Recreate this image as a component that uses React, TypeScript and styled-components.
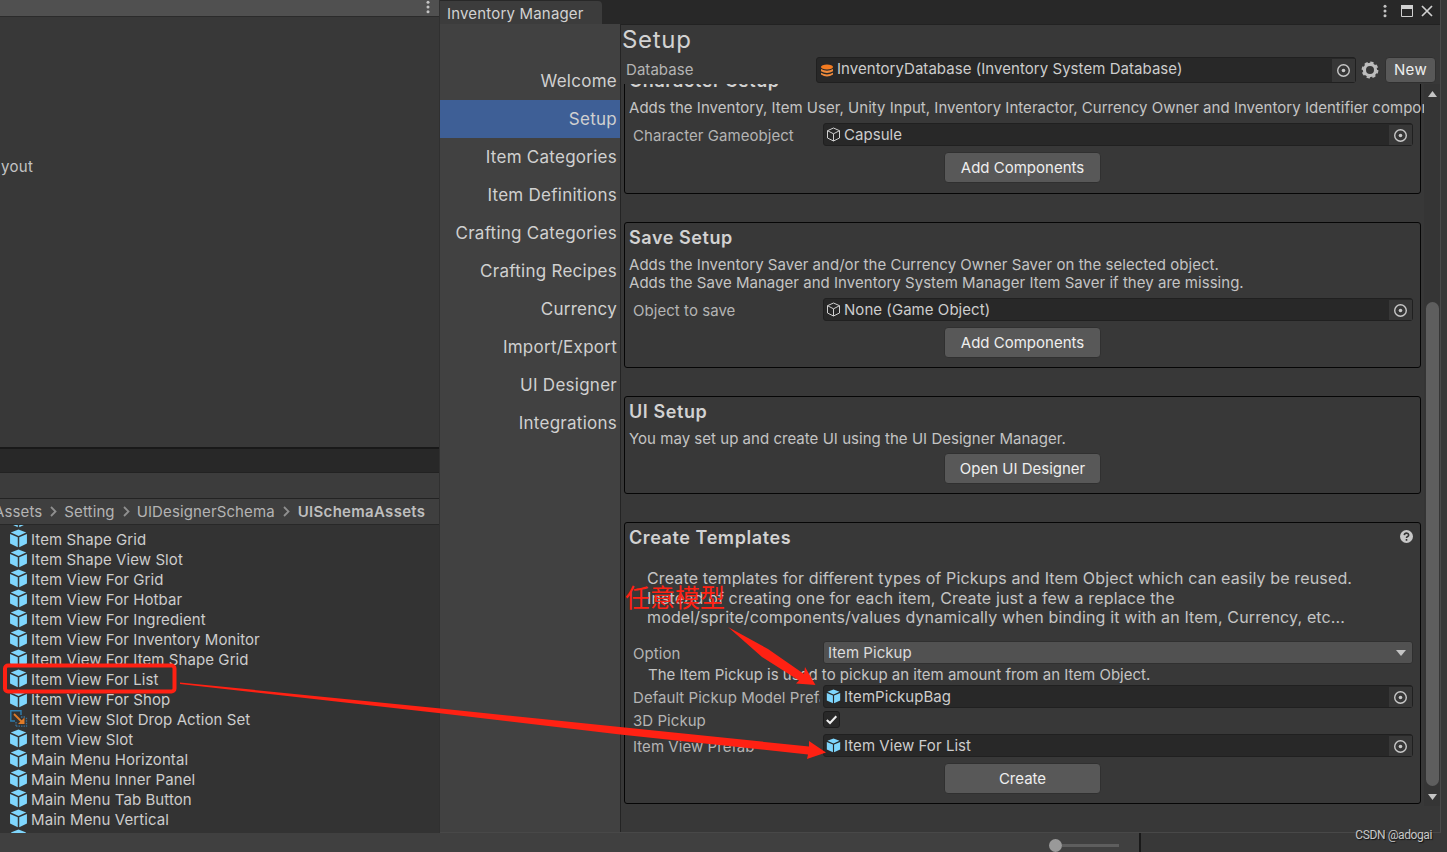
import React from "react";
import styled, { createGlobalStyle } from "styled-components";

const GlobalStyle = createGlobalStyle`
  * {
    box-sizing: border-box;
  }

  body {
    margin: 0;
    overflow: hidden;
    background: #383838;
    color: #c4c4c4;
    font-family: Inter, "Noto Sans CJK SC", sans-serif;
    font-size: 15px;
    letter-spacing: 0.05px;
    white-space: nowrap;
  }

  svg {
    display: block;
    flex: none;
  }
`;

const Editor = styled.div`
  position: relative;
  display: grid;
  grid-template-columns: 440px 1001px 6px;
  grid-template-rows: 833px 19px;

  width: 1447px;
  height: 852px;
  overflow: hidden;
`;

const LeftDock = styled.div`
  display: flex;
  flex-direction: column;

  border-right: 1px solid #303030;
  overflow: hidden;
`;

const HierarchyBar = styled.div`
  display: flex;
  justify-content: flex-end;

  height: 17px;
  padding-right: 7px;

  background: #505050;
  border-bottom: 1px solid #2b2b2b;
`;

const Hierarchy = styled.div`
  height: 430px;
  padding: 140px 0 0 1px;

  background: #383838;
  letter-spacing: 0.3px;
  line-height: 20px;
`;

const DockTabs = styled.div`
  height: 26px;

  background: #282828;
  border-top: 2px solid #191919;
  border-bottom: 1px solid #222;
`;

const DockToolbar = styled.div`
  height: 26px;

  background: #3c3c3c;
  border-bottom: 1px solid #232323;
`;

const Breadcrumb = styled.div`
  display: flex;
  align-items: center;

  height: 26px;

  background: #3f3f3f;
  border-bottom: 1px solid #282828;
  color: #b4b4b4;
  letter-spacing: 0.12px;

  svg {
    margin: 0 7px 0 8px;
  }

  strong {
    margin-left: 1px;

    font-weight: 600;
    color: #bebebe;
    letter-spacing: 0.3px;
  }
`;

const Crumb = styled.span<{ $shift?: number }>`
  margin-left: ${p => p.$shift || 0}px;
`;

const AssetList = styled.div`
  flex: 1;
  overflow: hidden;

  background: #333;
  color: #cdcdcd;
  letter-spacing: 0.08px;
`;

const AssetRow = styled.div`
  display: flex;
  align-items: center;

  height: 20px;
  padding-left: 9px;
  gap: 3px;

  svg {
    margin-bottom: 1px;
  }

  &:first-child {
    margin-top: -16px;
  }
`;

const Window = styled.div`
  display: flex;
  flex-direction: column;

  background: #383838;
  border-right: 1px solid #4a4a4a;
  border-bottom: 1px solid #484848;
`;

const TitleBar = styled.div`
  display: flex;
  justify-content: space-between;

  height: 24px;

  background: #282828;
`;

const Tab = styled.div`
  width: 162px;
  height: 24px;
  margin-top: 1px;
  padding-left: 7px;

  background: #3c3c3c;
  border-radius: 0 4px 0 0;
  line-height: 26px;
  letter-spacing: 0.18px;
  color: #d2d2d2;
`;

const WindowButtons = styled.div`
  display: flex;
  align-items: center;

  padding: 0 7px 2px 0;

  svg:nth-child(2) {
    margin: 0 8px 0 12px;
  }
`;

const WindowBody = styled.div`
  display: flex;
  flex: 1;
  min-height: 0;
`;

const Sidebar = styled.div`
  width: 181px;
  padding-top: 38px;

  background: #414141;
  border-right: 1px solid #242424;
`;

const MenuItem = styled.div<{ $selected?: boolean }>`
  height: 38px;
  padding-right: 3px;

  background: ${p => (p.$selected ? "#3e5f96" : "transparent")};
  color: #d0d0d0;
  font-size: 17px;
  letter-spacing: 0.26px;
  line-height: 39px;
  text-align: right;
`;

const Content = styled.div`
  display: flex;
  flex: 1;
  flex-direction: column;
  min-width: 0;

  border-top: 1px solid #222;
`;

const Heading = styled.div`
  height: 31px;
  padding-left: 1px;

  font-size: 24px;
  letter-spacing: 0.7px;
  line-height: 29px;
  color: #d2d2d2;
`;

const DatabaseRow = styled.div`
  display: flex;
  align-items: center;

  height: 28px;
  padding-left: 5px;
`;

const DatabaseLabel = styled.div`
  width: 190px;
  padding-bottom: 2px;

  color: #b4b4b4;
`;

const ScrollArea = styled.div`
  display: flex;
  height: 722px;
`;

const Viewport = styled.div`
  width: 803px;
  padding-left: 3px;
  overflow: hidden;
`;

const ScrollBar = styled.div`
  display: flex;
  flex-direction: column;
  align-items: center;
  justify-content: space-between;

  width: 16px;
  padding: 7px 0 6px;

  background: #353535;
`;

const Thumb = styled.div`
  width: 13px;
  height: 484px;
  margin: 204px 0 7px 1px;

  background: #5e5e5e;
  border-radius: 7px;
`;

const Box = styled.section<{ $height: number }>`
  width: 797px;
  height: ${p => p.$height}px;
  margin-bottom: 28px;

  border: 1px solid #060606;
  border-radius: 3px;

  &:first-child {
    margin-top: -19px;
  }
`;

const BoxTitle = styled.div`
  display: flex;
  justify-content: space-between;

  height: 33px;
  padding: 0 6px 0 4px;

  font-size: 18px;
  font-weight: 600;
  letter-spacing: 0.58px;
  line-height: 30px;
  color: #d2d2d2;
`;

const Description = styled.div`
  padding-left: 4px;
  margin-bottom: 6px;

  letter-spacing: 0.03px;
  line-height: 18px;
`;

const HelpText = styled.div`
  height: 59px;
  margin: 13px 0 13px 22px;

  font-size: 16px;
  letter-spacing: 0.14px;
  line-height: 19.6px;
`;

const Hint = styled.div`
  height: 21px;
  padding-left: 23px;

  letter-spacing: 0.01px;
  line-height: 22px;
`;

const FieldRow = styled.div<{ $gap?: number }>`
  display: flex;
  align-items: center;

  height: 23px;
  margin-bottom: ${p => p.$gap || 0}px;
  padding-left: 8px;
`;

const Label = styled.div`
  width: 187px;
  margin-right: 3px;
  padding-top: 1px;
  overflow: hidden;

  color: #b4b4b4;
`;

const ObjectField = styled.div<{ $width: number; $height?: number }>`
  display: flex;
  align-items: center;

  width: ${p => p.$width}px;
  height: ${p => p.$height || 23}px;
  padding-left: 2px;
  gap: 3px;

  background: #282828;
  border: 1px solid #202020;
  border-radius: 3px;
  color: #cdcdcd;
`;

const ObjectName = styled.span<{ $raised?: boolean }>`
  padding-bottom: ${p => (p.$raised ? 3 : 0)}px;
`;

const Picker = styled.div`
  display: flex;
  align-items: center;
  justify-content: center;
  align-self: stretch;

  width: 23px;
  margin: 1px 0 0 auto;

  background: #373737;
`;

const Dropdown = styled.div`
  display: flex;
  align-items: center;
  justify-content: space-between;

  width: 590px;
  height: 23px;
  padding: 0 6px 0 4px;

  background: #515151;
  border: 1px solid #303030;
  border-radius: 3px;
  color: #dcdcdc;
`;

const CheckBox = styled.div`
  width: 17px;
  height: 17px;

  background: #282828;
  border: 1px solid #1c1c1c;
  border-radius: 3px;
`;

const Button = styled.div<{ $top?: number }>`
  width: 157px;
  height: 31px;
  margin: ${p => p.$top || 0}px auto 0;

  background: #585858;
  border: 1px solid #303030;
  border-radius: 4px;
  color: #eee;
  letter-spacing: 0;
  line-height: 30px;
  text-align: center;
`;

const NewButton = styled(Button)`
  width: 51px;
  height: 26px;
  margin: 0 0 0 6px;

  letter-spacing: 0.3px;
  line-height: 24px;
`;

const GearSlot = styled.div`
  margin-left: 5px;
`;

const StatusBar = styled.div`
  grid-column: 1 / -1;
  display: flex;

  background: #383838;
`;

const ProjectFooter = styled.div`
  display: flex;
  align-items: center;

  width: 1141px;
  padding: 6px 0 0 1049px;

  background: #404040;
  border-right: 2px solid #191919;
`;

const SliderKnob = styled.div`
  width: 13px;
  height: 13px;

  background: #999;
  border-radius: 50%;
`;

const SliderTrack = styled.div`
  width: 57px;
  height: 3px;

  background: #5e5e5e;
`;

const Annotations = styled.svg`
  position: absolute;
  top: 0;
  left: 0;
`;

const Watermark = styled.div`
  position: absolute;
  right: 15px;
  bottom: 9px;

  color: #c8c8c8;
  font-family: Roboto, sans-serif;
  font-size: 12px;
  line-height: 16px;
  letter-spacing: -0.4px;
  text-shadow: 1px 1px 1px #111;
`;

const PrefabIcon = ({ size = 19 }: { size?: number }) => (
  <svg width={size} height={size} viewBox="0 0 18 18">
    <path d="M9 .5 16.3 3.4 9 6.6 1.7 3.4Z" fill="#7fd6fd" />
    <path d="M1 4.7 8.3 7.9V17.2L1 13.8Z" fill="#7fd6fd" />
    <path d="M17 4.7 9.7 7.9V17.2L17 13.8Z" fill="#7fd6fd" />
  </svg>
);

const CubeIcon = () => (
  <svg width="15" height="15" viewBox="0 0 15 15" fill="none" stroke="#d0d0d0">
    <path d="M7.5 1 13.5 3.7V11L7.5 14 1.5 11V3.7ZM1.5 3.7 7.5 6.8 13.5 3.7M7.5 6.8V14" />
  </svg>
);

const DatabaseIcon = () => (
  <svg width="15" height="14" viewBox="-1 -1 15 14">
    <ellipse cx="7" cy="3" rx="6" ry="2.5" fill="#f47b20" />
    <path
      d="M1 5Q7 8.6 13 5V7.2Q7 10.6 1 7.2ZM1 8.8Q7 12.2 13 8.8V10.6Q7 14.6 1 10.6Z"
      fill="#f08a3c"
    />
  </svg>
);

const DropActionIcon = () => (
  <svg width="19" height="19" viewBox="0 0 19 19" fill="none">
    <path d="M6 12H1.8V1.8H12V6" stroke="#2f7fb0" strokeWidth="1.4" />
    <path
      d="M7 17.2H17.5V8M7 13V17M12 8H17"
      stroke="#3a6f95"
      strokeWidth="1.3"
      strokeDasharray="1.5 1"
    />
    <path d="M5 5 13 13" stroke="#e07b28" strokeWidth="1.8" />
    <path d="M15.5 8.5V15H9Z" fill="#e07b28" />
  </svg>
);

const TargetIcon = () => (
  <svg width="13" height="13" viewBox="0 0 13 13">
    <circle cx="6.5" cy="6.5" r="5.8" fill="none" stroke="#c8c8c8" strokeWidth="1.4" />
    <circle cx="6.5" cy="6.5" r="1.8" fill="#c8c8c8" />
  </svg>
);

const GearIcon = () => (
  <svg width="18" height="18" viewBox="0 0 18 18" fill="none" stroke="#bdbdbd">
    <circle cx="9" cy="9" r="5.6" strokeWidth="3.2" />
    <circle cx="9" cy="9" r="7.5" strokeWidth="1.8" strokeDasharray="3.4 2.49" />
  </svg>
);

const DotsIcon = () => (
  <svg width="8" height="14" viewBox="0 0 8 14" fill="#c4c4c4">
    <circle cx="4" cy="2.2" r="1.5" />
    <circle cx="4" cy="7" r="1.5" />
    <circle cx="4" cy="11.8" r="1.5" />
  </svg>
);

const MaximizeIcon = () => (
  <svg width="12" height="12" viewBox="0 0 12 12" fill="none" stroke="#d0d0d0">
    <path d="M.5 .5H11.5V11.5H.5Z" />
    <path d="M0 2H12" strokeWidth="4" />
  </svg>
);

const CloseIcon = () => (
  <svg width="12" height="12" viewBox="0 0 12 12" stroke="#d0d0d0" strokeWidth="1.7">
    <path d="M1 1 11 11M11 1 1 11" />
  </svg>
);

const ArrowIcon = ({ up, width = 9 }: { up?: boolean; width?: number }) => (
  <svg width={width} height="6" viewBox="0 0 10 6" preserveAspectRatio="none">
    <path d={up ? "M0 6 5 0 10 6Z" : "M0 0H10L5 6Z"} fill="#c4c4c4" />
  </svg>
);

const ChevronIcon = () => (
  <svg width="7" height="11" viewBox="0 0 7 11" fill="none" stroke="#8f8f8f" strokeWidth="1.8">
    <path d="M1 1 5.5 5.5 1 10" />
  </svg>
);

const CheckIcon = () => (
  <svg width="15" height="15" viewBox="0 0 15 15" fill="none" stroke="#eee" strokeWidth="2">
    <path d="M2.8 8 6 11 12.3 4.2" />
  </svg>
);

const HelpIcon = () => (
  <svg width="15" height="30" viewBox="0 -7 15 30">
    <circle cx="7.5" cy="6.5" r="6.5" fill="#c8c8c8" />
    <path
      d="M5.3 5.1Q5.5 3.1 7.5 3.1T9.7 4.9Q9.7 5.9 8.6 6.5 7.5 7 7.5 8.1M7.5 9.1V10.7"
      fill="none"
      stroke="#333"
      strokeWidth="1.6"
    />
  </svg>
);

const assets = [
  "Item Shape",
  "Item Shape Grid",
  "Item Shape View Slot",
  "Item View For Grid",
  "Item View For Hotbar",
  "Item View For Ingredient",
  "Item View For Inventory Monitor",
  "Item View For Item Shape Grid",
  "Item View For List",
  "Item View For Shop",
  "Item View Slot Drop Action Set",
  "Item View Slot",
  "Main Menu Horizontal",
  "Main Menu Inner Panel",
  "Main Menu Tab Button",
  "Main Menu Vertical"
];

const menu = [
  "Welcome",
  "Setup",
  "Item Categories",
  "Item Definitions",
  "Crafting Categories",
  "Crafting Recipes",
  "Currency",
  "Import/Export",
  "UI Designer",
  "Integrations"
];

type FieldProps = { label: string; value: string; prefab?: boolean };

const Field = ({ label, value, prefab }: FieldProps) => (
  <FieldRow>
    <Label>{label}</Label>
    <ObjectField $width={590}>
      {prefab ? <PrefabIcon size={15} /> : <CubeIcon />}
      <ObjectName>{value}</ObjectName>
      <Picker>
        <TargetIcon />
      </Picker>
    </ObjectField>
  </FieldRow>
);

export default function App() {
  return (
    <Editor>
      <GlobalStyle />
      <LeftDock>
        <HierarchyBar>
          <DotsIcon />
        </HierarchyBar>
        <Hierarchy>yout</Hierarchy>
        <DockTabs />
        <DockToolbar />
        <Breadcrumb>
          <Crumb $shift={-6}>Assets</Crumb>
          <ChevronIcon />
          <Crumb>Setting</Crumb>
          <ChevronIcon />
          <Crumb>UIDesignerSchema</Crumb>
          <ChevronIcon />
          <strong>UISchemaAssets</strong>
        </Breadcrumb>
        <AssetList>
          {assets.map((name, i) => (
            <AssetRow key={name}>
              {name.endsWith("Action Set") ? <DropActionIcon /> : <PrefabIcon />}
              {i > 0 && name}
            </AssetRow>
          ))}
          <AssetRow>
            <PrefabIcon />
          </AssetRow>
        </AssetList>
      </LeftDock>

      <Window>
        <TitleBar>
          <Tab>Inventory Manager</Tab>
          <WindowButtons>
            <DotsIcon />
            <MaximizeIcon />
            <CloseIcon />
          </WindowButtons>
        </TitleBar>
        <WindowBody>
          <Sidebar>
            {menu.map(name => (
              <MenuItem key={name} $selected={name === "Setup"}>
                {name}
              </MenuItem>
            ))}
          </Sidebar>
          <Content>
            <Heading>Setup</Heading>
            <DatabaseRow>
              <DatabaseLabel>Database</DatabaseLabel>
              <ObjectField $width={540} $height={26}>
                <DatabaseIcon />
                <ObjectName $raised>InventoryDatabase (Inventory System Database)</ObjectName>
                <Picker>
                  <TargetIcon />
                </Picker>
              </ObjectField>
              <GearSlot>
                <GearIcon />
              </GearSlot>
              <NewButton>New</NewButton>
            </DatabaseRow>
            <ScrollArea>
              <Viewport>
                <Box $height={129}>
                  <BoxTitle>Character Setup</BoxTitle>
                  <Description>
                    Adds the Inventory, Item User, Unity Input, Inventory Interactor, Currency
                    Owner and Inventory Identifier components
                  </Description>
                  <Field label="Character Gameobject" value="Capsule" />
                  <Button $top={6}>Add Components</Button>
                </Box>
                <Box $height={146}>
                  <BoxTitle>Save Setup</BoxTitle>
                  <Description>
                    Adds the Inventory Saver and/or the Currency Owner Saver on the selected object.
                    <br />
                    Adds the Save Manager and Inventory System Manager Item Saver if they are
                    missing.
                  </Description>
                  <Field label="Object to save" value="None (Game Object)" />
                  <Button $top={6}>Add Components</Button>
                </Box>
                <Box $height={98}>
                  <BoxTitle>UI Setup</BoxTitle>
                  <Description>You may set up and create UI using the UI Designer Manager.</Description>
                  <Button $top={-1}>Open UI Designer</Button>
                </Box>
                <Box $height={282}>
                  <BoxTitle>
                    Create Templates
                    <HelpIcon />
                  </BoxTitle>
                  <HelpText>
                    Create templates for different types of Pickups and Item Object which can
                    easily be reused.
                    <br />
                    Instead of creating one for each item, Create just a few a replace the
                    <br />
                    model/sprite/components/values dynamically when binding it with an Item,
                    Currency, etc...
                  </HelpText>
                  <FieldRow>
                    <Label>Option</Label>
                    <Dropdown>
                      Item Pickup
                      <ArrowIcon width={10} />
                    </Dropdown>
                  </FieldRow>
                  <Hint>The Item Pickup is used to pickup an item amount from an Item Object.</Hint>
                  <Field label="Default Pickup Model Prefab" value="ItemPickupBag" prefab />
                  <FieldRow $gap={3}>
                    <Label>3D Pickup</Label>
                    <CheckBox>
                      <CheckIcon />
                    </CheckBox>
                  </FieldRow>
                  <Field label="Item View Prefab" value="Item View For List" prefab />
                  <Button $top={6}>Create</Button>
                </Box>
              </Viewport>
              <ScrollBar>
                <ArrowIcon up />
                <Thumb />
                <ArrowIcon />
              </ScrollBar>
            </ScrollArea>
          </Content>
        </WindowBody>
      </Window>

      <StatusBar>
        <ProjectFooter>
          <SliderKnob />
          <SliderTrack />
        </ProjectFooter>
      </StatusBar>

      <Annotations width="1447" height="852" fill="#ff2113">
        <rect x="5" y="665.5" width="169.5" height="26" rx="3" fill="none" stroke="#ff2113" strokeWidth="4" />
        <path d="M180 682.5 180 684 438 713 620 734.5 808 754.5 807 759 826 752.5 809 741 809 746.5 620 727 438 708.3Z" />
        <path d="M728 627 762 657 799 680.5 796 683.5 815.5 685 805 667 804 674 768 649Z" />
        <text x="625" y="606.5" fontSize="25" letterSpacing="0">
          任意模型
        </text>
      </Annotations>
      <Watermark>CSDN @adogai</Watermark>
    </Editor>
  );
}
